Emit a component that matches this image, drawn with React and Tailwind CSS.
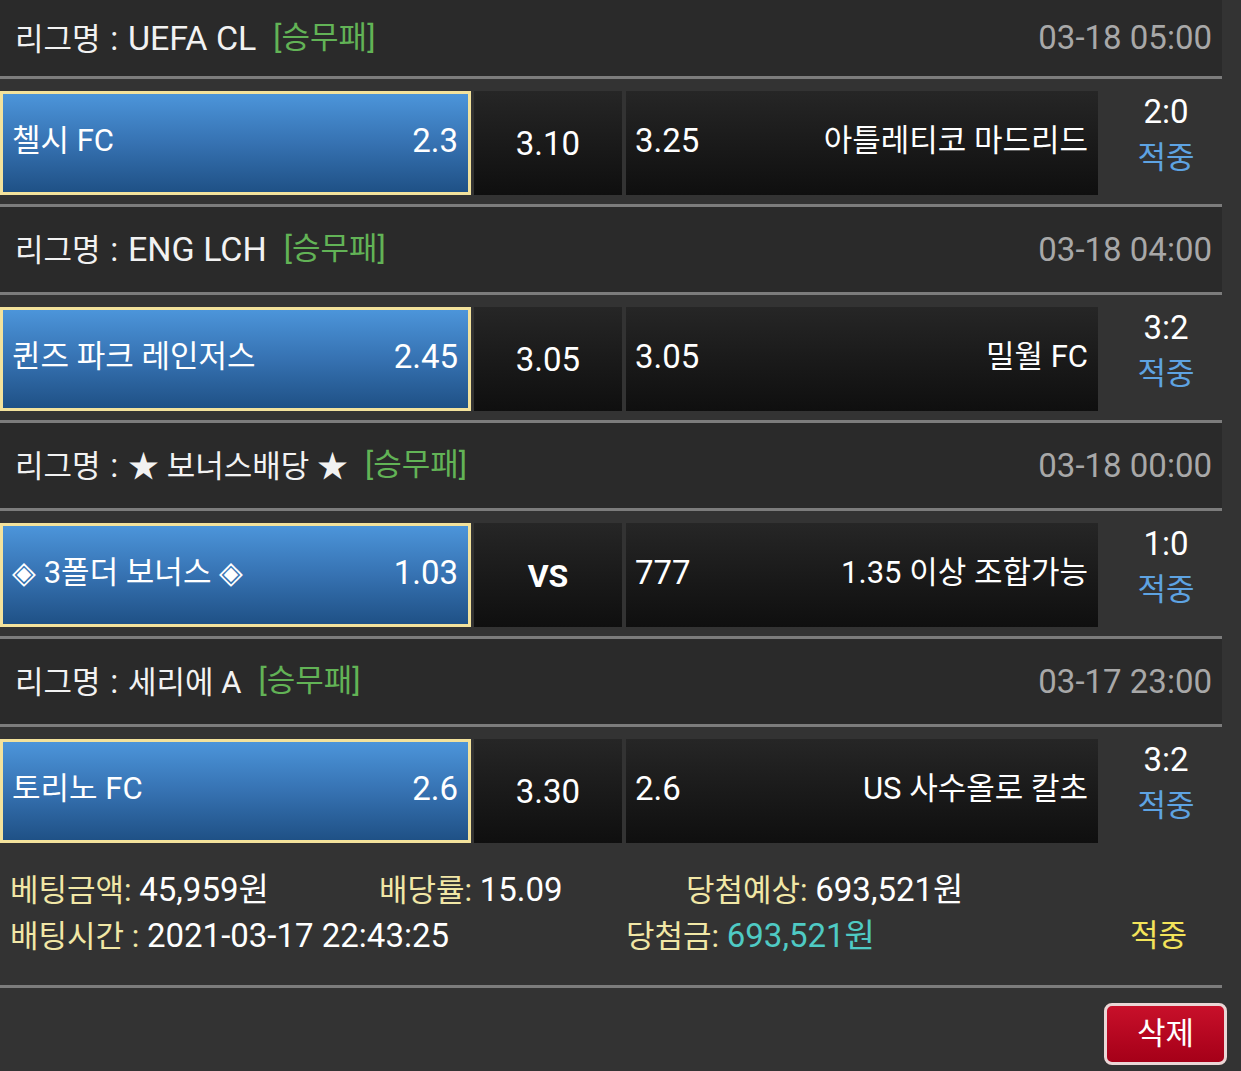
import React from 'react';

const matches = [
  {
    league: 'UEFA CL',
    latin: true,
    time: '03-18 05:00',
    home: '첼시 FC',
    homeOdds: '2.3',
    draw: '3.10',
    awayOdds: '3.25',
    away: '아틀레티코 마드리드',
    score: '2:0',
  },
  {
    league: 'ENG LCH',
    latin: true,
    time: '03-18 04:00',
    home: '퀸즈 파크 레인저스',
    homeOdds: '2.45',
    draw: '3.05',
    awayOdds: '3.05',
    away: '밀월 FC',
    score: '3:2',
  },
  {
    league: '★ 보너스배당 ★',
    latin: false,
    time: '03-18 00:00',
    home: '◈ 3폴더 보너스 ◈',
    homeOdds: '1.03',
    draw: 'VS',
    awayOdds: '777',
    away: '1.35 이상 조합가능',
    score: '1:0',
  },
  {
    league: '세리에 A',
    latin: false,
    time: '03-17 23:00',
    home: '토리노 FC',
    homeOdds: '2.6',
    draw: '3.30',
    awayOdds: '2.6',
    away: 'US 사수올로 칼초',
    score: '3:2',
  },
];

const font = { fontFamily: 'Roboto, "Noto Sans CJK KR", sans-serif' };

const Divider = () => <div className="h-[3px] w-[1222px] bg-[#7c7c7c]" />;

const MatchBlock = ({ m, first, last }) => (
  <>
    {/* 리그 헤더 */}
    <div
      className={`flex items-center justify-between w-[1222px] bg-[#2a2a2a] pl-[15px] pr-[10px] ${
        first ? 'h-[76px]' : 'h-[85px]'
      }`}
    >
      <div className="flex items-center gap-[17px] text-[31px] text-[#f2f2f2]">
        <span>
          리그명 <span className="px-[2px] text-[33px]">:</span>{' '}
          <span className={m.latin ? 'text-[34px]' : 'text-[31px]'}>{m.league}</span>
        </span>
        <span className="text-[#62b356]">[승무패]</span>
      </div>
      <span className="text-[33px] text-[#a8a8a8]">{m.time}</span>
    </div>
    <Divider />

    {/* 경기 줄 */}
    <div className="flex w-[1222px] h-[125px] pt-[12px] pb-[9px] bg-[#333333]">
      <div className="flex items-center justify-between w-[471px] border-[3px] border-[#f3e29c] bg-gradient-to-b from-[#4c95da] via-[#3672b2] to-[#1f5186] pl-[9px] pr-[10px] pb-[4px] text-[31px] text-white">
        <span>{m.home}</span>
        <span className="text-[33px]">{m.homeOdds}</span>
      </div>
      <div
        className={`flex items-center justify-center w-[148px] ml-[3px] pt-[2px] bg-gradient-to-b from-[#262626] to-[#0f0f0f] text-white ${
          m.draw === 'VS' ? 'text-[32px] font-bold' : 'text-[33px]'
        }`}
      >
        {m.draw}
      </div>
      <div className="flex items-center justify-between w-[472px] ml-[4px] pl-[9px] pr-[10px] pb-[4px] bg-gradient-to-b from-[#262626] to-[#0f0f0f] text-[31px] text-white">
        <span className="text-[33px]">{m.awayOdds}</span>
        <span>{m.away}</span>
      </div>
      <div className="flex flex-1 flex-col items-center justify-center pl-[12px] pb-[16px] leading-[46px] text-[31px]">
        <span className="text-white text-[33px]">{m.score}</span>
        <span className="text-[#5ea3e2]">적중</span>
      </div>
    </div>
    {!last && <Divider />}
  </>
);

export default function App() {
  return (
    <div className="w-[1241px] h-[1071px] overflow-hidden bg-[#333333]" style={font}>
      {matches.map((m, i) => (
        <MatchBlock key={i} m={m} first={i === 0} last={i === matches.length - 1} />
      ))}

      {/* 베팅 정보 */}
      <div className="w-[1222px] h-[133px] pt-[15px] text-[31px] leading-[45px]">
        <div className="flex pl-[10px]">
          <span className="w-[369px]">
            <span className="text-[#f1e7a6]">베팅금액: </span>
            <span className="text-white text-[33px]">45,959원</span>
          </span>
          <span className="w-[307px]">
            <span className="text-[#f1e7a6]">배당률: </span>
            <span className="text-white text-[33px]">15.09</span>
          </span>
          <span>
            <span className="text-[#f1e7a6]">당첨예상: </span>
            <span className="text-white text-[33px]">693,521원</span>
          </span>
        </div>
        <div className="flex pl-[10px]">
          <span className="w-[616px]">
            <span className="text-[#f1e7a6]">배팅시간 : </span>
            <span className="text-white text-[33px]">2021-03-17 22:43:25</span>
          </span>
          <span className="w-[504px]">
            <span className="text-[#f1e7a6]">당첨금: </span>
            <span className="text-[#4fcac4] text-[33px]">693,521원</span>
          </span>
          <span className="text-[#f3e45a]">적중</span>
        </div>
      </div>
      <Divider />

      {/* 삭제 버튼 */}
      <div className="flex justify-end w-[1241px] pt-[15px] pr-[14px]">
        <button className="w-[123px] h-[62px] rounded-[8px] border-[3px] border-[#ead6d6] bg-gradient-to-b from-[#c8102a] to-[#a50018] text-[31px] text-white">
          삭제
        </button>
      </div>
    </div>
  );
}
